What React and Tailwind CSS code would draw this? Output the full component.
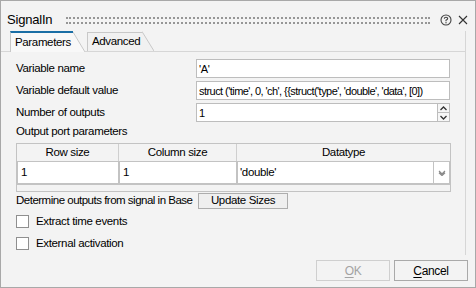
import { useState } from 'react'

const font = { fontFamily: '"Liberation Sans", Arial, sans-serif' }

function Tab({ label, active }) {
  return (
    <div className={`flex items-end ${active ? 'h-[21px]' : 'h-[20px] border-b border-[#d6d6d6]'}`}>
      <div
        className={`flex h-full items-center border-l pl-[4px] pr-[2px] ${
          active
            ? 'border-t-2 border-l-[#c8c8c8] border-t-[#1a6ea5] bg-[#f8f8f8]'
            : 'border-t border-[#c8c8c8] bg-[#f1f1f1]'
        }`}
      >
        {label}
      </div>
      <svg width="12" height={active ? 21 : 20} className="block shrink-0">
        <polygon
          points={active ? '0,0 0,21 12,21' : '0,0 0,20 12,20'}
          fill={active ? '#f8f8f8' : '#f1f1f1'}
        />
        <line
          x1="0"
          y1={active ? 1 : 0.5}
          x2="12"
          y2={active ? 21 : 20}
          stroke="#c8c8c8"
          strokeWidth="1"
        />
      </svg>
    </div>
  )
}

function Field({ label, value, children }) {
  return (
    <div className="flex h-[19px] items-center">
      <div className="w-[180px] shrink-0">{label}</div>
      <div className="flex h-full w-[254px] items-center">{children ?? value}</div>
    </div>
  )
}

function Check({ label }) {
  const [on, setOn] = useState(false)
  return (
    <label className="flex h-[13px] items-center gap-[7px]">
      <span
        onClick={() => setOn(!on)}
        className="flex h-[13px] w-[13px] items-center justify-center border border-[#8f8f8f] bg-white text-[10px] leading-none"
      >
        {on ? '✓' : ''}
      </span>
      <span>{label}</span>
    </label>
  )
}

export default function App() {
  const [name, setName] = useState("'A'")
  const [def, setDef] = useState("struct ('time', 0, 'ch', {{struct('type', 'double', 'data', [0])")
  const [count, setCount] = useState('1')

  const inputCls =
    'h-full w-full border border-[#bdbdbd] bg-white px-[2px] text-[11px] text-black outline-none'

  return (
    <div
      style={font}
      className="flex h-[288px] w-[476px] flex-col border border-[#a8a8a8] bg-[#f3f3f3] text-[11.5px] tracking-[-0.35px] text-black"
    >
      {/* title bar */}
      <div className="flex h-[30px] items-center pl-[6px] pr-[7px] pt-[8px]">
        <span className="text-[13px] tracking-[-0.2px]">SignalIn</span>
        <div className="ml-[14px] mr-[10px] h-[7px] flex-1 border-y-2 border-dotted border-[#969696]" />
        <svg width="12" height="12" viewBox="0 0 12 12" className="mr-[6px]">
          <circle cx="6" cy="6" r="5" fill="none" stroke="#444" strokeWidth="1.1" />
          <path d="M4.3 4.7 Q4.3 3.2 6 3.2 Q7.7 3.2 7.7 4.6 Q7.7 5.5 6 6.2 L6 7.2" fill="none" stroke="#444" strokeWidth="1.1" />
          <circle cx="6" cy="8.8" r="0.7" fill="#444" />
        </svg>
        <svg width="10" height="10" viewBox="0 0 10 10">
          <path d="M1 1 L9 9 M9 1 L1 9" stroke="#333" strokeWidth="1.1" />
        </svg>
      </div>

      {/* tabs */}
      <div className="flex h-[21px] w-[465px] items-end">
        <div className="h-[21px] w-[9px] border-b border-[#d6d6d6]" />
        <Tab label="Parameters" active />
        <div className="h-[21px] w-[2px] border-b border-[#d6d6d6]" />
        <Tab label="Advanced" />
        <div className="h-[21px] flex-1 border-b border-r border-[#d6d6d6]" />
      </div>

      {/* panel */}
      <div className="flex h-[203px] w-[465px] flex-col border-r border-[#d6d6d6] pl-[15px] pt-[7px]">
        <div className="flex flex-col gap-[3px]">
          <Field label="Variable name">
            <input className={inputCls} value={name} onChange={(e) => setName(e.target.value)} />
          </Field>
          <Field label="Variable default value">
            <input
              className={`${inputCls} tracking-[-0.55px]`}
              value={def}
              onChange={(e) => setDef(e.target.value)}
            />
          </Field>
          <Field label="Number of outputs">
            <div className="flex h-full w-full border border-[#bdbdbd] bg-white">
              <input
                className="h-full flex-1 bg-white px-[2px] text-[11px] outline-none"
                value={count}
                onChange={(e) => setCount(e.target.value)}
              />
              <div className="flex w-[12px] flex-col border-l border-[#bdbdbd]">
                <div className="flex flex-1 items-center justify-center border-b border-[#bdbdbd] bg-[#f6f6f6]">
                  <svg width="7" height="5" viewBox="0 0 7 5">
                    <path d="M0.5 4 L3.5 1 L6.5 4" fill="none" stroke="#333" strokeWidth="1.3" />
                  </svg>
                </div>
                <div className="flex flex-1 items-center justify-center bg-[#f6f6f6]">
                  <svg width="7" height="5" viewBox="0 0 7 5">
                    <path d="M0.5 1 L3.5 4 L6.5 1" fill="none" stroke="#333" strokeWidth="1.3" />
                  </svg>
                </div>
              </div>
            </div>
          </Field>
        </div>

        <div className="mt-[1px] h-[16px] leading-[16px]">Output port parameters</div>

        {/* table */}
        <div className="mt-[4px] flex h-[49px] w-[435px] flex-col border border-[#c3c3c3] bg-[#f3f3f3]">
          <div className="flex h-[17px] items-center">
            <div className="flex h-full w-[102px] items-center justify-center border-r border-[#cfcfcf]">Row size</div>
            <div className="flex h-full w-[118px] items-center justify-center border-r border-[#cfcfcf]">Column size</div>
            <div className="flex h-full flex-1 items-center justify-center">Datatype</div>
          </div>
          <div className="flex h-[24px] border-b border-[#c3c3c3]">
            <div className="flex w-[102px] items-center border border-[#c3c3c3] bg-white pl-[3px]">1</div>
            <div className="flex w-[118px] items-center border border-[#c3c3c3] bg-white pl-[3px]">1</div>
            <div className="flex flex-1 items-center border border-[#c3c3c3] bg-white pl-[2px]">
              <span className="flex-1">'double'</span>
              <div className="flex h-full w-[16px] items-center justify-center border-l border-[#c3c3c3]">
                <svg width="8" height="6" viewBox="0 0 8 6">
                  <path d="M1 1 L4 4 L7 1 M1 2.8 L4 5.6 L7 2.8" fill="none" stroke="#8a8a8a" strokeWidth="1.2" />
                </svg>
              </div>
            </div>
          </div>
        </div>

        <div className="mt-[1px] flex h-[16px] items-center">
          <span className="w-[182px] tracking-[-0.5px]">Determine outputs from signal in Base</span>
          <button className="h-[16px] w-[90px] border border-[#adadad] bg-[#efefef] text-[11.5px] leading-none">
            Update Sizes
          </button>
        </div>

        <div className="mt-[6px] flex flex-col gap-[9px]">
          <Check label="Extract time events" />
          <Check label="External activation" />
        </div>
      </div>

      {/* buttons */}
      <div className="flex justify-end gap-[4px] pr-[7px] pt-[5px]">
        <button className="h-[21px] w-[74px] border border-[#cfcfcf] bg-[#f3f3f3] text-[12px] text-[#a3a3a3]">
          <span className="underline underline-offset-2">O</span>K
        </button>
        <button className="h-[21px] w-[74px] border border-[#a9a9a9] bg-[#f3f3f3] text-[12px]">
          <span className="underline underline-offset-2">C</span>ancel
        </button>
      </div>
    </div>
  )
}
